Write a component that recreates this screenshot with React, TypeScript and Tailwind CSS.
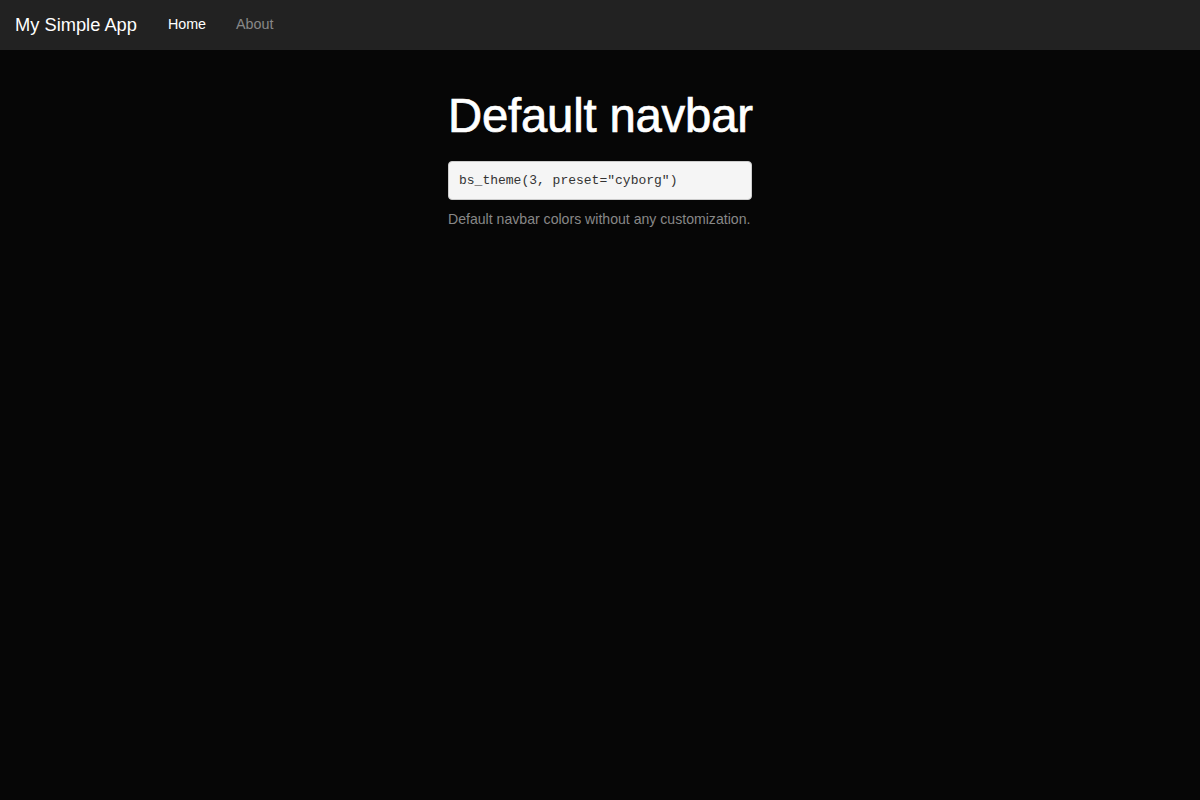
export default function App() {
  return (
    <div className="min-h-[800px] w-full bg-[#060606]" style={{ fontFamily: '"Liberation Sans", Arial, sans-serif' }}>
      <nav className="h-[50px] bg-[#222222] flex items-center">
        <span className="pl-[15px] pr-[16px] text-[18.3px] text-white leading-[20px]">My Simple App</span>
        <ul className="flex items-center">
          <li className="px-[15px] text-[14.3px] text-white">Home</li>
          <li className="px-[15px] text-[14.3px] text-[#888888]">About</li>
        </ul>
      </nav>
      <div className="flex justify-center">
        <div className="w-[304px] pt-[40px]">
          <h1 className="text-[47.3px] leading-[52px] text-white font-normal tracking-[-0.2px] whitespace-nowrap [-webkit-text-stroke:0.7px_white]">Default navbar</h1>
          <div className="mt-[19px] h-[39px] bg-[#f5f5f5] border border-[#cccccc] rounded-[4px] flex items-center px-[10px]">
            <code className="text-[13px] text-[#333333]" style={{ fontFamily: '"Liberation Mono", "Courier New", monospace' }}>bs_theme(3, preset="cyborg")</code>
          </div>
          <p className="mt-[10px] text-[14.1px] leading-[18px] text-[#888888] whitespace-nowrap">Default navbar colors without any customization.</p>
        </div>
      </div>
    </div>
  );
}
